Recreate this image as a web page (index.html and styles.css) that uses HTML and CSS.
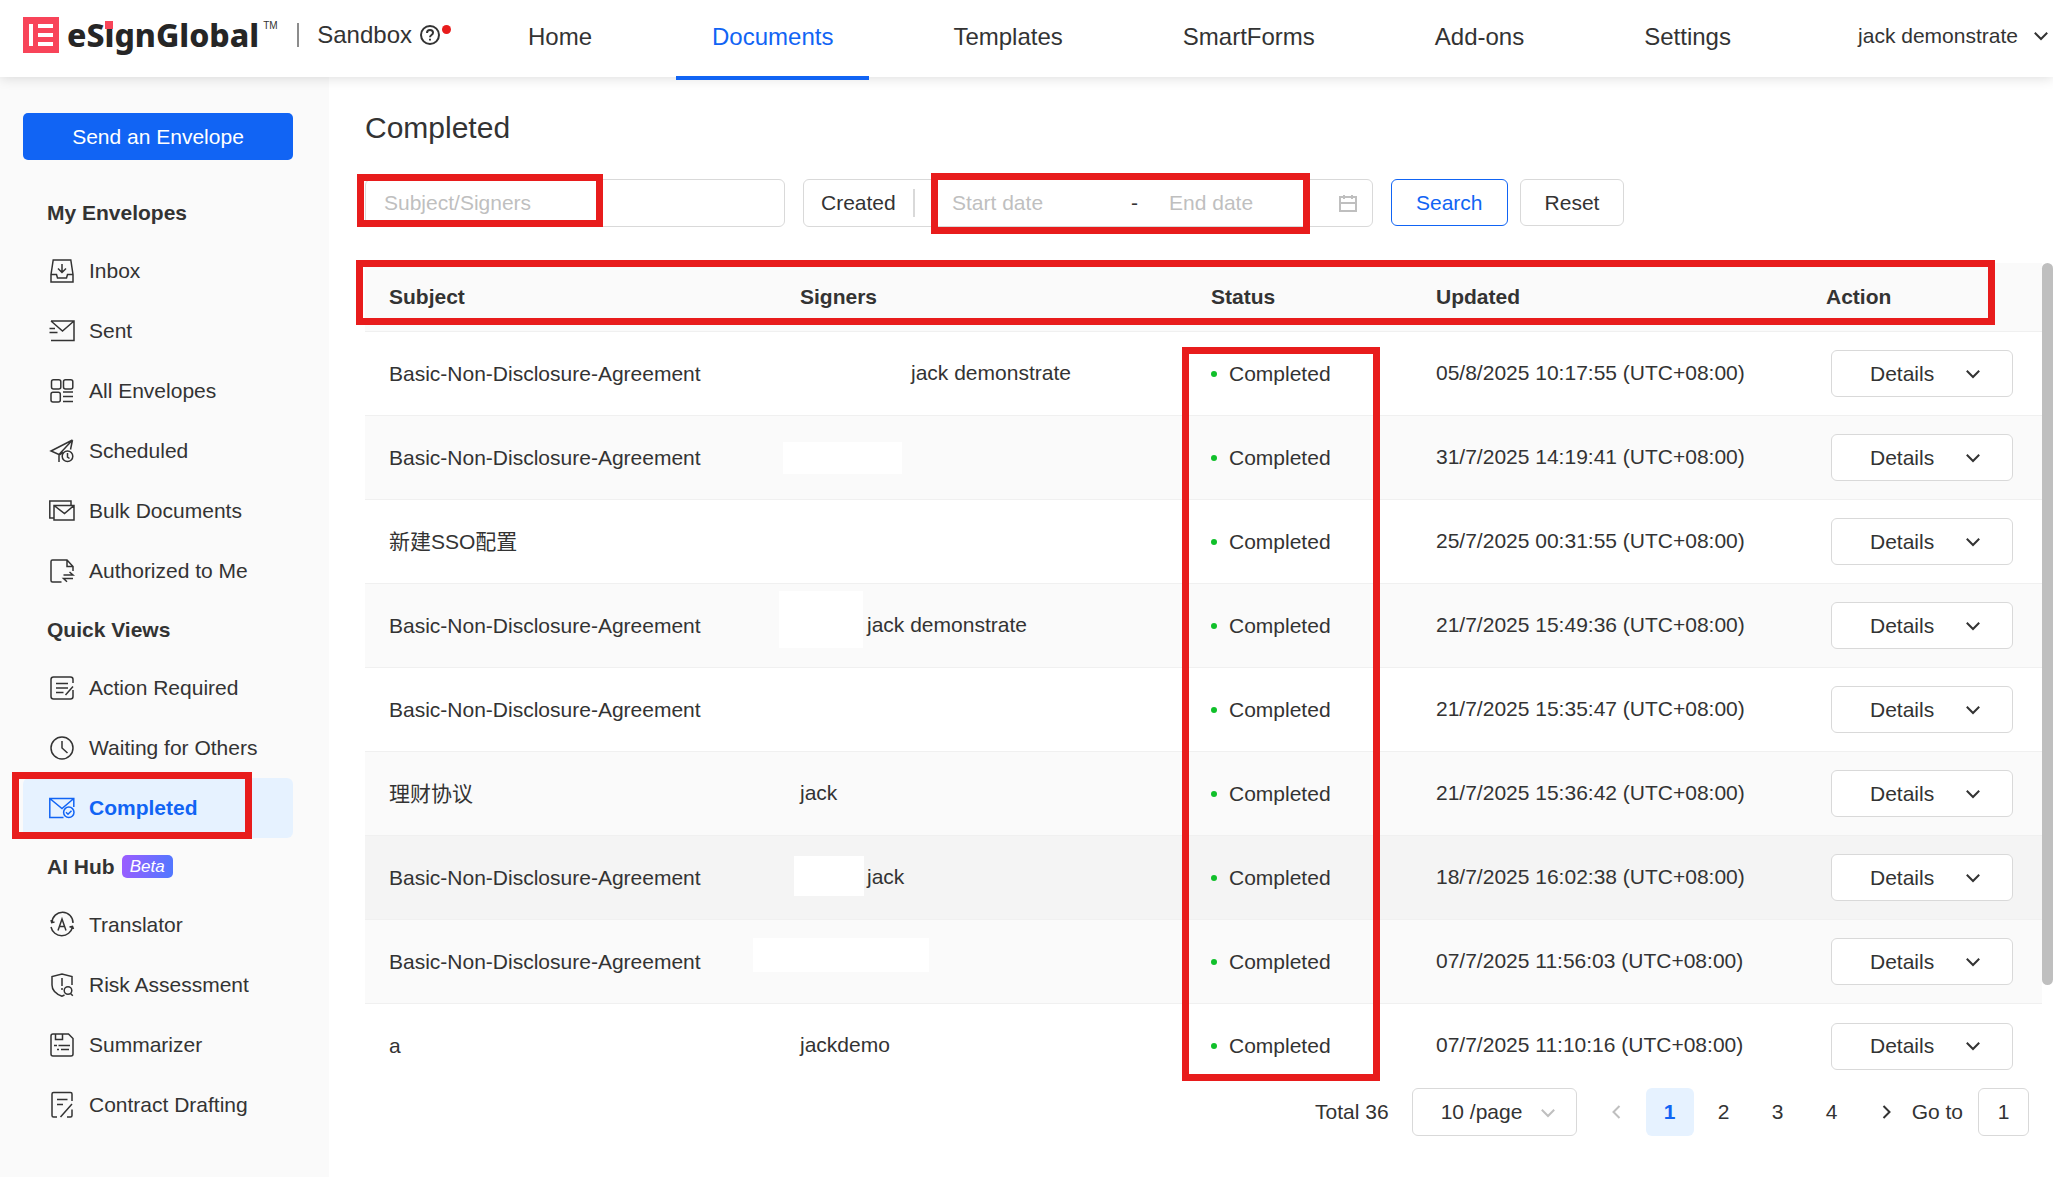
FILE: index.html
```html
<!DOCTYPE html>
<html lang="en">
<head>
  <meta charset="UTF-8" />
  <meta name="viewport" content="width=device-width, initial-scale=1" />
  <title>Completed - eSignGlobal</title>
  <link rel="stylesheet" href="styles.css">
</head>
<body>
  <!-- icon set -->
  <svg class="sprite" aria-hidden="true">
    <symbol id="i-inbox" viewBox="0 0 24 24"><path d="M1 15.5 3.2 1h17.6L23 15.5V23H1zM1 15.5h5.5L7.5 19h9l1-3.500H23M12 5v8.500M8 9.500l4 4 4-4" /></symbol>
    <symbol id="i-sent" viewBox="0 0 24 24"><path d="M1 2h23v19.500H1M1 2l11.500 10L24 2M-.5 9.500H5M-.5 13.500h8" /></symbol>
    <symbol id="i-all" viewBox="0 0 24 24"><rect x="1.500" y=".7" width="9.300" height="9.300" rx="2" /><rect x="13.500" y=".7" width="9.300" height="9.300" rx="2" /><rect x="1" y="13.300" width="9.300" height="9.600" rx="2" /><path d="M13 13h10M13 17.500h10M13 22.500h10" /></symbol>
    <symbol id="i-scheduled" viewBox="0 0 24 24"><path d="M22.500 1 1 12l8 3.500V23M22.500 1 9 15.500M22.500 1l-2 9.500M9 16l4-2.500" /><circle cx="17.500" cy="17.300" r="5.300" /><path d="M17.500 14v4l2 1.500" /></symbol>
    <symbol id="i-bulk" viewBox="0 0 24 24"><path d="M4.500 19H-.2V2H21v4M4 6.500h20V21H4zM4 6.500l10.500 8 9.500-8" /></symbol>
    <symbol id="i-authorized" viewBox="0 0 24 24"><path d="M11.500 23H2.500Q1 23 1 21.500V2.500Q1 1 2.500 1H17l6 6.500V12M17 1v6.500h6M13.500 16H23l-3.500-3M23 19.500h-9.500l3.500 3.300" /></symbol>
    <symbol id="i-action" viewBox="0 0 24 24"><path d="M23 7V3.500Q23 1 20.500 1h-17Q1 1 1 3.500v17Q1 23 3.500 23h17q2.500 0 2.500-2.500V14M6 7.500h12M6 12h12M6 16.500h7.500M23 10.500 15.500 19" /></symbol>
    <symbol id="i-waiting" viewBox="0 0 24 24"><circle cx="12" cy="12" r="11" /><path d="M12 5v7l5.500 5" /></symbol>
    <symbol id="i-completed" viewBox="0 0 24 24"><path d="M13.500 21.500H-.2V2.500h24V11M-.2 2.500 12 12.500l11.800-10" /><circle cx="18.800" cy="16.300" r="5.200" /><path d="m16 16.200 2 2 3.500-3.500" /></symbol>
    <symbol id="i-translator" viewBox="0 0 24 24"><path d="M2 9.500A10.500 10.500 0 0 1 23 10M1 14a11 11 0 0 0 21.500 0M1 7l.7 2.700L4.500 9M23.500 16l-1-2.700-3 .7M8 17.500 12 6l4 11.500M9.500 13.500h5" /></symbol>
    <symbol id="i-risk" viewBox="0 0 24 24"><path d="M22 12V3.500L12 1 2 3.500V12q0 7.500 10 11.200l2.500-1.200M12 5v8M12 15v2" /><circle cx="18" cy="17.500" r="3.800" /><path d="m20.500 20.500 2.300 2.300" /></symbol>
    <symbol id="i-summarizer" viewBox="0 0 24 24"><path d="M3 1h15.500L23 5.500V21q0 2-2 2H3q-2 0-2-2V3q0-2 2-2zM5.500 1v5.500h7V1M4 12.500h3M8.500 12.500h11.500M7 16.500h2M11 16.500h8" /></symbol>
    <symbol id="i-contract" viewBox="0 0 24 24"><path d="M22 8V1Q22-.5 20.500-.5h-17Q2-.5 2 1v21.500Q2 24 3.500 24H7M22 11 10.500 24M22 16.500V22.500Q22 24 20.500 24H17M7 6.500h10.500M7 11.500h6" /></symbol>
    <symbol id="i-down" viewBox="0 0 14 8"><path d="m.8.8 6.200 6.200L13.200.8" /></symbol>
  </svg>

  <header class="topbar">
    <div class="brand">
      <svg class="logo" viewBox="0 0 36 36" aria-hidden="true"><path fill="#f84459" d="M0 0h36v36H0z" /><path fill="#fff" d="M6 7h4v22H6zM15 7h15v4H15zM15 16h15v4H15zM15 25h15v4H15z" /></svg>
      <span class="wordmark">eS<span class="dot-i">i</span>gnGlobal</span><sup class="tm">TM</sup>
      <span class="divider"></span>
      <span class="env">Sandbox</span>
      <span class="help">
        <svg viewBox="0 0 20 20" aria-hidden="true"><circle cx="10" cy="10" r="9" /><path d="M7 8q0-3 3-3t3 2.700q0 1.300-1.500 2.300T10 12.200M10 13.800v1.700" /></svg>
      </span>
    </div>
    <nav class="main-nav">
      <a href="#">Home</a>
      <a href="#" class="active">Documents</a>
      <a href="#">Templates</a>
      <a href="#">SmartForms</a>
      <a href="#">Add-ons</a>
      <a href="#">Settings</a>
    </nav>
    <button class="user" type="button">jack demonstrate <svg class="chev"><use href="#i-down" /></svg></button>
  </header>

  <div class="layout">
    <aside class="sidebar">
      <button class="send" type="button">Send an Envelope</button>
      <h2>My Envelopes</h2>
      <a href="#"><svg><use href="#i-inbox" /></svg>Inbox</a>
      <a href="#"><svg><use href="#i-sent" /></svg>Sent</a>
      <a href="#"><svg><use href="#i-all" /></svg>All Envelopes</a>
      <a href="#"><svg><use href="#i-scheduled" /></svg>Scheduled</a>
      <a href="#"><svg><use href="#i-bulk" /></svg>Bulk Documents</a>
      <a href="#"><svg><use href="#i-authorized" /></svg>Authorized to Me</a>
      <h2>Quick Views</h2>
      <a href="#"><svg><use href="#i-action" /></svg>Action Required</a>
      <a href="#"><svg><use href="#i-waiting" /></svg>Waiting for Others</a>
      <a href="#" class="active"><svg><use href="#i-completed" /></svg>Completed<span class="mark mark-side"></span></a>
      <h2>AI Hub <span class="beta">Beta</span></h2>
      <a href="#"><svg><use href="#i-translator" /></svg>Translator</a>
      <a href="#"><svg><use href="#i-risk" /></svg>Risk Assessment</a>
      <a href="#"><svg><use href="#i-summarizer" /></svg>Summarizer</a>
      <a href="#"><svg><use href="#i-contract" /></svg>Contract Drafting</a>
    </aside>

    <main class="content">
      <h1>Completed</h1>

      <form class="filters">
        <div class="search-box">
          <input type="text" placeholder="Subject/Signers" aria-label="Subject or signers" />
          <span class="mark mark-search"></span>
        </div>
        <div class="date-box">
          <select aria-label="Date type"><option>Created</option><option>Updated</option></select>
          <span class="sep"></span>
          <input type="text" class="start" placeholder="Start date" aria-label="Start date" />
          <span class="dash">-</span>
          <input type="text" class="end" placeholder="End date" aria-label="End date" />
          <svg class="calendar" viewBox="0 0 18 18" aria-hidden="true"><path d="M1 3h16v14H1zM1 9h16M5 1v4M13 1v4" /></svg>
          <span class="mark mark-dates"></span>
        </div>
        <div class="buttons">
          <button type="button" class="btn primary">Search</button>
          <button type="button" class="btn">Reset</button>
        </div>
      </form>

      <div class="table-wrap">
        <table>
          <colgroup><col><col><col class="c-status"><col class="c-updated"><col class="c-action"></colgroup>
          <thead>
            <tr><th>Subject</th><th>Signers</th><th>Status</th><th>Updated</th><th>Action</th></tr>
          </thead>
          <tbody>
            <tr>
              <td>Basic-Non-Disclosure-Agreement</td>
              <td class="signers"><span class="indent-lg">jack demonstrate</span></td>
              <td><span class="status">Completed</span></td>
              <td class="updated">05/8/2025 10:17:55 (UTC+08:00)</td>
              <td><button class="btn details" type="button">Details <svg class="chev"><use href="#i-down" /></svg></button></td>
            </tr>
            <tr>
              <td>Basic-Non-Disclosure-Agreement</td>
              <td class="signers"><span class="mask mask-1"></span></td>
              <td><span class="status">Completed</span></td>
              <td class="updated">31/7/2025 14:19:41 (UTC+08:00)</td>
              <td><button class="btn details" type="button">Details <svg class="chev"><use href="#i-down" /></svg></button></td>
            </tr>
            <tr>
              <td>新建SSO配置</td>
              <td class="signers"></td>
              <td><span class="status">Completed</span></td>
              <td class="updated">25/7/2025 00:31:55 (UTC+08:00)</td>
              <td><button class="btn details" type="button">Details <svg class="chev"><use href="#i-down" /></svg></button></td>
            </tr>
            <tr>
              <td>Basic-Non-Disclosure-Agreement</td>
              <td class="signers"><span class="mask mask-2"></span><span class="indent">jack demonstrate</span></td>
              <td><span class="status">Completed</span></td>
              <td class="updated">21/7/2025 15:49:36 (UTC+08:00)</td>
              <td><button class="btn details" type="button">Details <svg class="chev"><use href="#i-down" /></svg></button></td>
            </tr>
            <tr>
              <td>Basic-Non-Disclosure-Agreement</td>
              <td class="signers"></td>
              <td><span class="status">Completed</span></td>
              <td class="updated">21/7/2025 15:35:47 (UTC+08:00)</td>
              <td><button class="btn details" type="button">Details <svg class="chev"><use href="#i-down" /></svg></button></td>
            </tr>
            <tr>
              <td>理财协议</td>
              <td class="signers">jack</td>
              <td><span class="status">Completed</span></td>
              <td class="updated">21/7/2025 15:36:42 (UTC+08:00)</td>
              <td><button class="btn details" type="button">Details <svg class="chev"><use href="#i-down" /></svg></button></td>
            </tr>
            <tr class="hovered">
              <td>Basic-Non-Disclosure-Agreement</td>
              <td class="signers"><span class="mask mask-3"></span><span class="indent">jack</span></td>
              <td><span class="status">Completed</span></td>
              <td class="updated">18/7/2025 16:02:38 (UTC+08:00)</td>
              <td><button class="btn details" type="button">Details <svg class="chev"><use href="#i-down" /></svg></button></td>
            </tr>
            <tr>
              <td>Basic-Non-Disclosure-Agreement</td>
              <td class="signers"><span class="mask mask-4"></span></td>
              <td><span class="status">Completed</span></td>
              <td class="updated">07/7/2025 11:56:03 (UTC+08:00)</td>
              <td><button class="btn details" type="button">Details <svg class="chev"><use href="#i-down" /></svg></button></td>
            </tr>
            <tr>
              <td>a</td>
              <td class="signers">jackdemo</td>
              <td><span class="status">Completed</span></td>
              <td class="updated">07/7/2025 11:10:16 (UTC+08:00)</td>
              <td><button class="btn details" type="button">Details <svg class="chev"><use href="#i-down" /></svg></button></td>
            </tr>
          </tbody>
        </table>
        <div class="scrollbar"><div class="thumb"></div></div>
        <span class="mark mark-head"></span>
        <span class="mark mark-status"></span>
      </div>

      <div class="pagination">
        <span class="total">Total 36</span>
        <span class="page-size">
          <select aria-label="Page size"><option>10 /page</option><option>20 /page</option><option>50 /page</option></select>
          <svg class="chev"><use href="#i-down" /></svg>
        </span>
        <div class="pages">
          <button type="button" disabled aria-label="Previous page"><svg viewBox="0 0 10 16"><path d="M8.500 2 2.500 8l6 6" /></svg></button>
          <button type="button" class="current">1</button>
          <button type="button">2</button>
          <button type="button">3</button>
          <button type="button">4</button>
          <button type="button" aria-label="Next page"><svg viewBox="0 0 10 16"><path d="m2.500 2 6 6-6 6" /></svg></button>
        </div>
        <label for="goto">Go to</label>
        <input id="goto" type="text" value="1" />
      </div>
    </main>
  </div>
</body>
</html>
```

FILE: styles.css
```css
:root {
  --blue: #1164f4;
  --blue-bg: #e6f2ff;
  --text: #333;
  --border: #d9d9d9;
  --muted: #bfbfbf;
  --mark: #e81c1c;
}
* {
  box-sizing: border-box;
}
body {
  margin: 0;
  min-height: 100vh;
  display: flex;
  flex-direction: column;
  font-family: "Liberation Sans", "Noto Sans CJK SC", sans-serif;
  font-size: 21px;
  line-height: 24px;
  color: var(--text);
  background: #fff;
}
button, input, select {
  font: inherit;
  color: inherit;
}
button {
  cursor: pointer;
}
a {
  color: inherit;
  text-decoration: none;
}
svg {
  fill: none;
  stroke: currentColor;
  overflow: visible;
}
symbol {
  overflow: visible;
}
.sprite {
  position: absolute;
  width: 0;
  height: 0;
}
.chev {
  width: 14px;
  height: 8px;
  stroke-width: 2;
}

/* top bar */
.topbar {
  display: flex;
  align-items: stretch;
  height: 77px;
  background: #fff;
  box-shadow: 0 1px 12px rgba(0, 0, 0, 0.14);
  position: relative;
  z-index: 2;
}
.brand {
  display: flex;
  align-items: center;
  width: 492px;
  padding: 0 0 7px 23px;
}
.logo {
  width: 36px;
  height: 36px;
  stroke: none;
}
.wordmark {
  margin-left: 8px;
  font-family: "Noto Sans", sans-serif;
  font-weight: 800;
  font-size: 32px;
  line-height: 40px;
  color: #262626;
}
.dot-i {
  position: relative;
}
.dot-i::before {
  content: "";
  position: absolute;
  left: 1px;
  top: 8px;
  width: 8px;
  height: 8px;
  background: #f84459;
}
.tm {
  align-self: flex-start;
  margin: 21px 0 0 4px;
  font-size: 10px;
  line-height: 10px;
}
.divider {
  width: 2px;
  height: 24px;
  margin: 0 18px 0 auto;
  background: #8c8c8c;
}
.env {
  font-size: 24px;
}
.help {
  position: relative;
  display: flex;
  margin: 0 52px 0 8px;
}
.help svg {
  width: 20px;
  height: 20px;
  stroke-width: 2;
}
.help::after {
  content: "";
  position: absolute;
  left: 22px;
  top: 0;
  width: 9px;
  height: 9px;
  border-radius: 50%;
  background: var(--mark);
}
.main-nav {
  display: flex;
  gap: 48px;
  font-size: 24px;
}
.main-nav a {
  display: flex;
  align-items: center;
  padding: 0 36px 4px;
  position: relative;
}
.main-nav .active {
  color: var(--blue);
}
.main-nav .active::after {
  content: "";
  position: absolute;
  left: 0;
  right: 0;
  bottom: -3px;
  height: 4px;
  background: var(--blue);
}
.user {
  display: flex;
  align-items: center;
  gap: 16px;
  margin-left: auto;
  padding: 0 5px 5px;
  border: 0;
  background: none;
}

/* sidebar */
.layout {
  display: flex;
  flex: 1;
}
.sidebar {
  width: 329px;
  flex-shrink: 0;
  padding: 36px 36px 36px 23px;
  background: #fafafa;
}
.send {
  display: block;
  width: 100%;
  height: 47px;
  margin-bottom: 24px;
  border: 0;
  border-radius: 5px;
  background: var(--blue);
  color: #fff;
}
.sidebar h2 {
  display: flex;
  align-items: center;
  gap: 7px;
  height: 57px;
  margin: 0;
  padding-left: 24px;
  font-size: 21px;
}
.sidebar a {
  display: flex;
  align-items: center;
  gap: 15px;
  height: 60px;
  padding-left: 27px;
  border-radius: 6px;
  position: relative;
}
.sidebar a svg {
  width: 24px;
  height: 24px;
  stroke-width: 1.5;
}
.sidebar .active {
  background: var(--blue-bg);
  color: var(--blue);
  font-weight: bold;
}
.beta {
  padding: 0 8px;
  height: 23px;
  line-height: 23px;
  border-radius: 5px;
  background: linear-gradient(100deg, #9c5cff, #4f78ff);
  color: #fff;
  font-size: 17px;
  font-style: italic;
  font-weight: normal;
}

/* red callout frames */
.mark {
  position: absolute;
  border: 7px solid var(--mark);
  pointer-events: none;
  z-index: 3;
}
.mark-side {
  left: -11px;
  top: -6px;
  width: 240px;
  height: 67px;
}
.mark-search {
  left: -8px;
  top: -5px;
  width: 246px;
  height: 53px;
}
.mark-dates {
  left: 127px;
  top: -7px;
  width: 379px;
  height: 61px;
}
.mark-head {
  left: -9px;
  right: 58px;
  top: -3px;
  height: 65px;
}
.mark-status {
  right: 673px;
  top: 84px;
  bottom: 7px;
  width: 198px;
}

/* content */
.content {
  flex: 1;
  min-width: 0;
  padding: 33px 0 41px 36px;
}
h1 {
  margin: 0;
  font-size: 30px;
  line-height: 36px;
  font-weight: normal;
}
.filters {
  display: flex;
  gap: 18px;
  margin: 33px 0 36px;
}
.search-box {
  position: relative;
  width: 420px;
}
.search-box input {
  width: 100%;
  height: 48px;
  padding: 0 18px;
  border: 1px solid var(--border);
  border-radius: 6px;
}
::placeholder {
  color: var(--muted);
  opacity: 1;
}
.date-box {
  position: relative;
  display: flex;
  align-items: center;
  width: 570px;
  height: 48px;
  padding: 0 14px 0 17px;
  border: 1px solid var(--border);
  border-radius: 6px;
}
.date-box select, .date-box input {
  border: 0;
  padding: 0;
  background: none;
  appearance: none;
}
.date-box select {
  width: 92px;
}
.sep {
  width: 2px;
  height: 28px;
  background: var(--border);
}
.date-box .start {
  width: 179px;
  margin-left: 37px;
}
.date-box .end {
  width: 160px;
  margin-left: 31px;
}
.calendar {
  width: 18px;
  height: 18px;
  margin-left: 10px;
  color: var(--muted);
  stroke-width: 2;
}
.buttons {
  display: flex;
  gap: 12px;
}
.btn {
  height: 47px;
  padding: 0 24px;
  border: 1px solid var(--border);
  border-radius: 6px;
  background: #fff;
}
.btn.primary {
  border-color: var(--blue);
  color: var(--blue);
}

/* table */
.table-wrap {
  position: relative;
  display: flex;
}
table {
  width: 100%;
  min-width: 0;
  table-layout: fixed;
  border-collapse: separate;
  border-spacing: 0;
}
.c-status {
  width: 225px;
}
.c-updated {
  width: 390px;
}
.c-action {
  width: 240px;
}
th, td {
  height: 84px;
  padding: 0 24px;
  text-align: left;
  border-bottom: 1px solid #f0f0f0;
  white-space: nowrap;
}
th {
  height: 69px;
  background: #fafafa;
}
td:last-child {
  padding: 0 29px;
}
tbody tr:nth-child(even) {
  background: #fafafa;
}
tbody tr.hovered {
  background: #f4f4f4;
}
tbody tr:last-child td {
  border-bottom: 0;
}
.signers, .updated {
  padding-bottom: 2px;
}
.signers {
  position: relative;
}
.indent {
  margin-left: 67px;
}
.indent-lg {
  margin-left: 111px;
}
.mask {
  position: absolute;
  background: #fff;
}
.mask-1 {
  left: 7px;
  top: 26px;
  width: 119px;
  height: 32px;
}
.mask-2 {
  left: 3px;
  top: 7px;
  width: 84px;
  height: 57px;
}
.mask-3 {
  left: 18px;
  top: 20px;
  width: 70px;
  height: 40px;
}
.mask-4 {
  left: -23px;
  top: 18px;
  width: 176px;
  height: 34px;
}
.status {
  display: flex;
  align-items: center;
  gap: 12px;
}
.status::before {
  content: "";
  width: 6px;
  height: 6px;
  border-radius: 50%;
  background: #10c02a;
}
.details {
  display: flex;
  align-items: center;
  justify-content: space-between;
  width: 182px;
  padding: 0 32px 0 38px;
}
.scrollbar {
  width: 11px;
  flex-shrink: 0;
}
.thumb {
  height: 87.5%;
  border-radius: 6px;
  background: #bfbfbf;
}

/* pagination */
.pagination {
  display: flex;
  align-items: center;
  justify-content: flex-end;
  padding-right: 24px;
}
.total {
  margin-right: 23px;
}
.page-size {
  position: relative;
  margin-right: 15px;
}
.page-size select {
  width: 165px;
  height: 48px;
  padding: 0 28px;
  border: 1px solid var(--border);
  border-radius: 6px;
  background: #fff;
  appearance: none;
}
.page-size .chev {
  position: absolute;
  right: 22px;
  top: 21px;
  color: var(--muted);
  pointer-events: none;
}
.pages {
  display: flex;
  gap: 6px;
}
.pages button {
  display: flex;
  align-items: center;
  justify-content: center;
  width: 48px;
  height: 48px;
  padding: 0;
  border: 0;
  border-radius: 6px;
  background: none;
}
.pages svg {
  width: 10px;
  height: 16px;
  stroke-width: 2;
}
.pages button:disabled {
  color: var(--muted);
}
.pages .current {
  background: var(--blue-bg);
  color: var(--blue);
  font-weight: bold;
}
.pagination label {
  margin-left: 2px;
}
.pagination input {
  width: 51px;
  height: 48px;
  margin-left: 15px;
  padding: 0;
  border: 1px solid var(--border);
  border-radius: 6px;
  text-align: center;
}
```
